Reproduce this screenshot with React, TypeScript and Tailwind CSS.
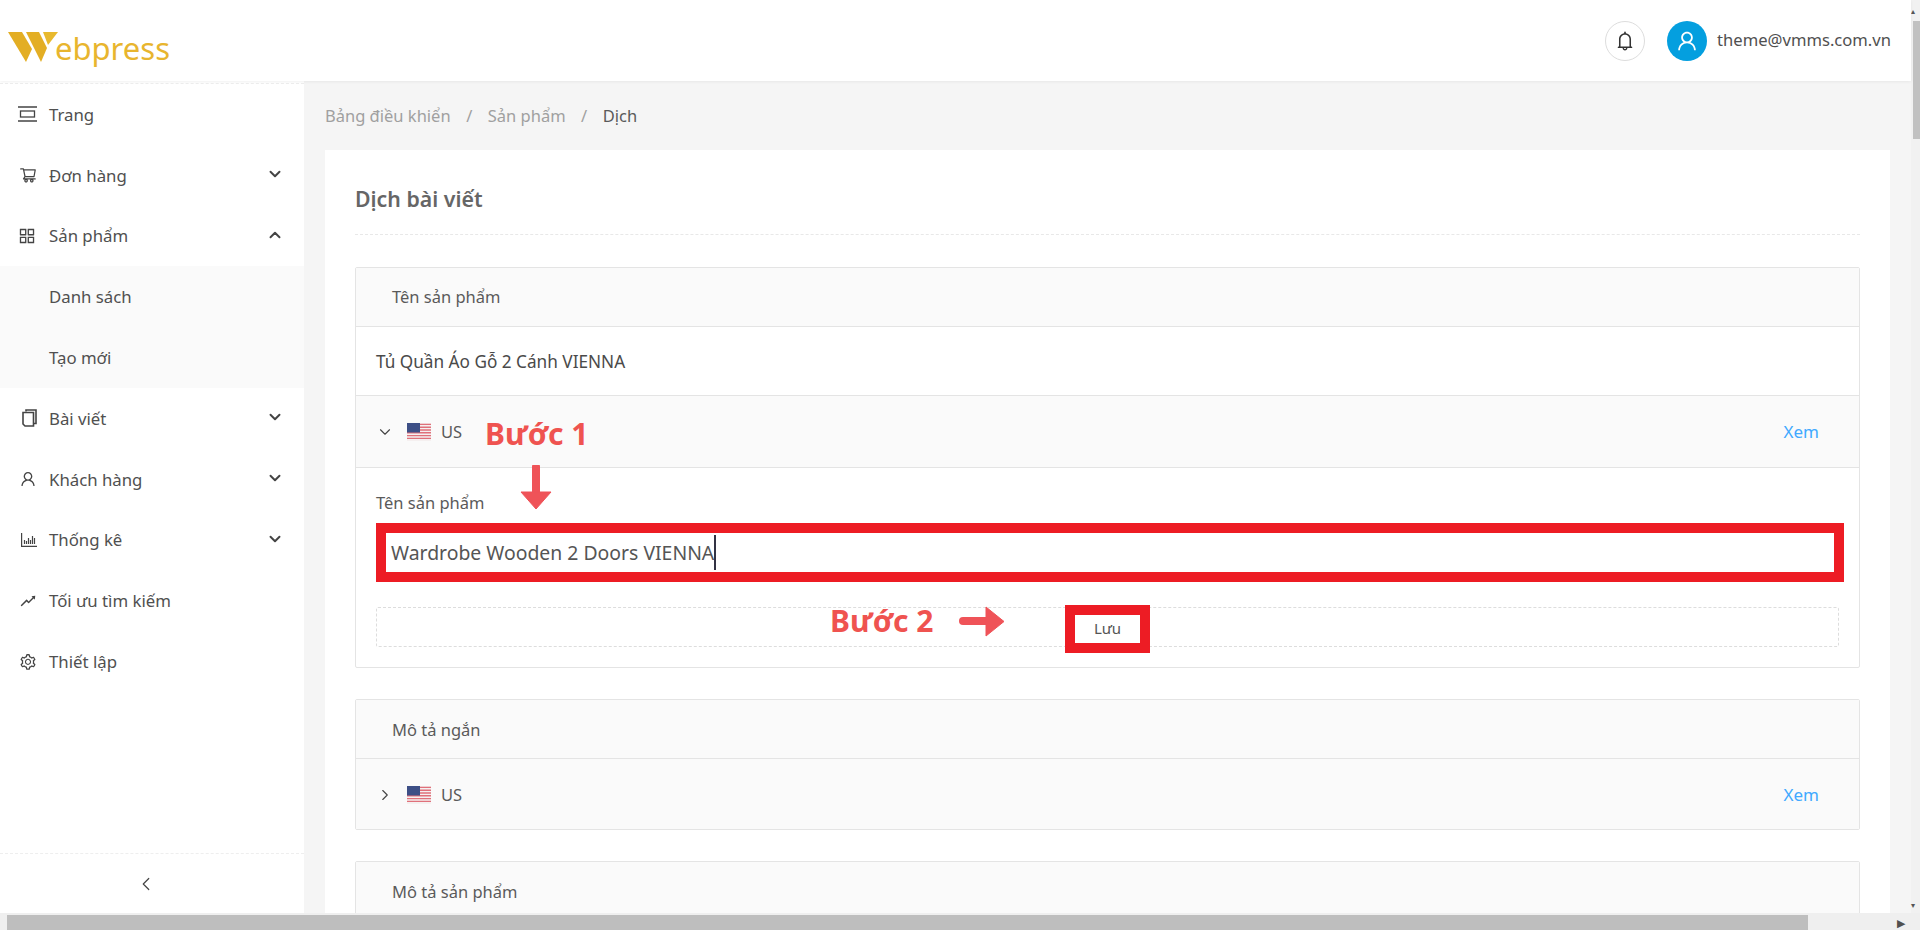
import React from "react"
import { ChevronDown, ChevronRight, ChevronLeft, ChevronUp } from "lucide-react"
import { AiOutlineAppstore, AiOutlineBell, AiOutlineRise, AiOutlineSetting, AiOutlineShoppingCart, AiOutlineUser } from "react-icons/ai"

function PageIcon() {
  return (
    <svg width="19" height="16" viewBox="0 0 19 16" fill="none" stroke="currentColor" strokeWidth="1.3">
      <path d="M0 1h19M0 15h19" />
      <rect x="2.500" y="5" width="14" height="6" />
    </svg>
  )
}

function PostIcon() {
  return (
    <svg width="15" height="18" viewBox="0 0 15 18" fill="none" stroke="currentColor" strokeWidth="1.600">
      <path d="M4 2.500V1h10v13.500h-2" />
      <path d="M1 3.500h10.500V17H3l-2-2z" />
    </svg>
  )
}

function StatsIcon() {
  return (
    <svg width="16" height="14" viewBox="0 0 16 14" fill="none" stroke="currentColor" strokeWidth="1.200">
      <path d="M.6 0v13.300H16" />
      <path d="M3.500 11V7M5.500 11V8M7.500 11V5M9.500 11V7M11.500 11V3M13.500 11V5" />
    </svg>
  )
}

function UsFlag() {
  return (
    <svg width="24" height="18" viewBox="0 0 24 18" className="ml-[1px]">
      <rect width="24" height="18" fill="#f5f0f0" />
      <path d="M0 1.400h24M0 4.200h24M0 7h24M0 9.800h24M0 12.600h24M0 15.400h24" stroke="#e0707a" strokeWidth="1.400" />
      <rect width="13" height="9.500" fill="#3d4f86" />
    </svg>
  )
}

function Logo() {
  return (
    <div className="flex h-full items-end pb-[14px] pl-2">
      <svg width="50" height="32" viewBox="0 0 50 32" className="mb-[4px]">
        <path d="M0 1h14l10 17-6 13z" fill="#e3ae24" />
        <path d="M18 1h13l8 16-6 14z" fill="#e3ae24" />
        <path d="M35 1h15L40 14z" fill="#e8b92e" />
      </svg>
      <span className="-ml-[3px] text-[31px] leading-[38px] text-[#e8b52e]">ebpress</span>
    </div>
  )
}

type MenuItem = { label: string; icon?: React.ReactNode; arrow?: "up" | "down"; sub?: boolean }

const menu: MenuItem[] = [
  { label: "Trang", icon: <PageIcon /> },
  { label: "Đơn hàng", icon: <AiOutlineShoppingCart size={18} />, arrow: "down" },
  { label: "Sản phẩm", icon: <AiOutlineAppstore size={20} />, arrow: "up" },
  { label: "Danh sách", sub: true },
  { label: "Tạo mới", sub: true },
  { label: "Bài viết", icon: <PostIcon />, arrow: "down" },
  { label: "Khách hàng", icon: <AiOutlineUser size={18} />, arrow: "down" },
  { label: "Thống kê", icon: <StatsIcon />, arrow: "down" },
  { label: "Tối ưu tìm kiếm", icon: <AiOutlineRise size={18} /> },
  { label: "Thiết lập", icon: <AiOutlineSetting size={18} /> },
]

function Sidebar() {
  return (
    <aside className="flex w-[304px] flex-col bg-white text-[16.800px] text-[#505050]">
      <div className="mt-[2px] flex-1 border-t border-dashed border-[#eeeeee]">
        {menu.map((item) => (
          <div key={item.label} className={`flex h-[60.800px] items-center ${item.sub ? "bg-[#fafafa]" : ""}`}>
            <div className="flex w-[49px] justify-end pr-[12px] text-[#444444]">{item.icon}</div>
            <span className="flex-1">{item.label}</span>
            {item.arrow === "down" && <ChevronDown size={18} strokeWidth={2.600} className="mr-[20px] mb-[2px] text-[#444444]" />}
            {item.arrow === "up" && <ChevronUp size={18} strokeWidth={2.600} className="mr-[20px] mb-[2px] text-[#444444]" />}
          </div>
        ))}
      </div>
      <div className="flex h-[60px] items-center justify-center border-t border-dashed border-[#eeeeee]">
        <ChevronLeft size={22} strokeWidth={1.300} className="mr-[12px] text-[#444444]" />
      </div>
    </aside>
  )
}

function LangRow({ open }: { open?: boolean }) {
  return (
    <div className={`flex items-center bg-[#fafafa] text-[16.500px] ${open ? "h-[72px] border-b border-[#e4e4e4]" : "h-[70px] pt-[2px]"}`}>
      <div className="flex w-[47px] justify-end pr-[9px] text-[#444444]">
        {open ? <ChevronDown size={18} strokeWidth={1.500} /> : <ChevronRight size={18} strokeWidth={1.500} />}
      </div>
      <div className="ml-[3px]">
        <UsFlag />
      </div>
      <span className="ml-[10px] flex-1 pt-[1px] text-[#5a5a5a]">US</span>
      <a className="mr-[40px] text-[17px] text-[#40a9ff]">Xem</a>
    </div>
  )
}

function Main() {
  return (
    <main className="flex-1 overflow-hidden bg-[#f5f5f5] px-[21px] text-[#5a5a5a]">
      <div className="flex h-[69px] items-center gap-[15.500px] pt-[2px] text-[16.500px] text-[#a0a0a0]">
        <span>Bảng điều khiển</span>
        <span>/</span>
        <span>Sản phẩm</span>
        <span>/</span>
        <span className="text-[#5a5a5a]">Dịch</span>
      </div>

      <div className="h-[800px] bg-white px-[30px]">
        <h1 className="flex h-[85px] items-center border-b border-dashed border-[#e8e8e8] pt-[13px] text-[21.300px] font-semibold text-[#666666]">
          Dịch bài viết
        </h1>

        <section className="mt-[32px] rounded-[2px] border border-[#e4e4e4]">
          <div className="flex h-[59px] items-center border-b border-[#e4e4e4] bg-[#fafafa] pl-[36px] text-[16.500px]">Tên sản phẩm</div>
          <div className="flex h-[69px] items-center border-b border-[#e4e4e4] pl-[20px] pt-[2px] text-[17.200px] text-[#4a4a4a]">
            Tủ Quần Áo Gỗ 2 Cánh VIENNA
          </div>
          <div className="relative">
            <LangRow open />
            <span className="absolute left-[129px] top-[18px] text-[30px] leading-[40px] font-bold text-[#ef5350]">Bước 1</span>
            {/* mui ten xuong */}
            <svg width="32" height="46" viewBox="0 0 32 46" className="absolute left-[164px] top-[69px]">
              <path d="M16 2v28" stroke="#ef5358" strokeWidth="8" strokeLinecap="round" />
              <path d="M1 27h30L16 44z" fill="#ef5358" stroke="#ef5358" strokeLinejoin="round" />
            </svg>
          </div>
          <div className="px-[20px] pb-[20px]">
            <div className="flex h-[55px] items-end pb-[10px] text-[16.500px] leading-[20px]">Tên sản phẩm</div>
            <div className="flex h-[59px] w-[1468px] items-center border-[10px] border-[#ed1c24] bg-white pl-[5px] text-[19.400px] text-[#555555]">
              Wardrobe Wooden 2 Doors VIENNA
              <span className="h-[35px] w-[2px] bg-[#333344]" />
            </div>
            <div className="relative mt-[25px] flex h-[40px] w-[1463px] items-center rounded-[2px] border border-dashed border-[#dddddd]">
              <span className="absolute left-[453px] top-[-7px] text-[30px] leading-[40px] font-bold text-[#ef5350]">Bước 2</span>
              <svg width="48" height="34" viewBox="0 0 48 34" className="absolute left-[582px] top-[-3px]">
                <path d="M4 16h30" stroke="#ef5358" strokeWidth="8" strokeLinecap="round" />
                <path d="M27 2v29l18-14.500z" fill="#ef5358" stroke="#ef5358" strokeLinejoin="round" />
              </svg>
              <button className="absolute left-[688px] top-[-3px] flex h-[48px] w-[85px] items-center justify-center border-[10px] border-[#ed1c24] bg-white pb-[2px] text-[15px] text-[#555555]">
                Lưu
              </button>
            </div>
          </div>
        </section>

        <section className="mt-[31px] rounded-[2px] border border-[#e4e4e4]">
          <div className="flex h-[59px] items-center border-b border-[#e4e4e4] bg-[#fafafa] pl-[36px] pt-[2px] text-[16.500px]">Mô tả ngắn</div>
          <LangRow />
        </section>

        <section className="mt-[31px] rounded-[2px] border border-[#e4e4e4]">
          <div className="flex h-[59px] items-center border-b border-[#e4e4e4] bg-[#fafafa] pl-[36px] pt-[2px] text-[16.500px]">Mô tả sản phẩm</div>
        </section>
      </div>
    </main>
  )
}

export default function App() {
  return (
    <div className="flex h-[930px] w-[1920px] flex-col overflow-hidden bg-white font-['Noto_Sans',sans-serif]">
      <div className="flex min-h-0 flex-1">
        <div className="flex min-w-0 flex-1 flex-col">
          <header className="relative z-10 flex h-[81px] items-center justify-between bg-white shadow-[0_1px_3px_rgba(0,0,0,0.06)]">
            <Logo />
            <div className="flex items-center pr-[20px]">
              <div className="flex h-[40px] w-[40px] items-center justify-center rounded-full border border-[#dddddd] text-[#333333]">
                <AiOutlineBell size={22} />
              </div>
              <div className="ml-[22px] flex h-[40px] w-[40px] items-center justify-center rounded-full bg-[#049fdf] text-white">
                <AiOutlineUser size={24} />
              </div>
              <span className="ml-[10px] text-[16.600px] text-[#505050]">theme@vmms.com.vn</span>
            </div>
          </header>
          <div className="flex min-h-0 flex-1">
            <Sidebar />
            <Main />
          </div>
        </div>
        {/* thanh cuon doc */}
        <div className="flex w-[9px] flex-col bg-[#f1f1f1]">
          <div className="h-[21px] text-[8px] leading-[21px] text-[#555555]">▴</div>
          <div className="ml-[2px] h-[118px] bg-[#c1c1c1]" />
          <div className="flex-1" />
          <div className="h-[17px] text-[8px] leading-[17px] text-[#555555]">▾</div>
        </div>
      </div>
      {/* thanh cuon ngang */}
      <div className="flex h-[17px] items-end bg-[#efefef]">
        <div className="w-[7px]" />
        <div className="h-[15px] w-[1801px] bg-[#bebebe]" />
        <div className="flex-1" />
        <div className="mr-[15px] h-[15px] text-[11px] leading-[15px] text-[#505050]">▶</div>
      </div>
    </div>
  )
}
